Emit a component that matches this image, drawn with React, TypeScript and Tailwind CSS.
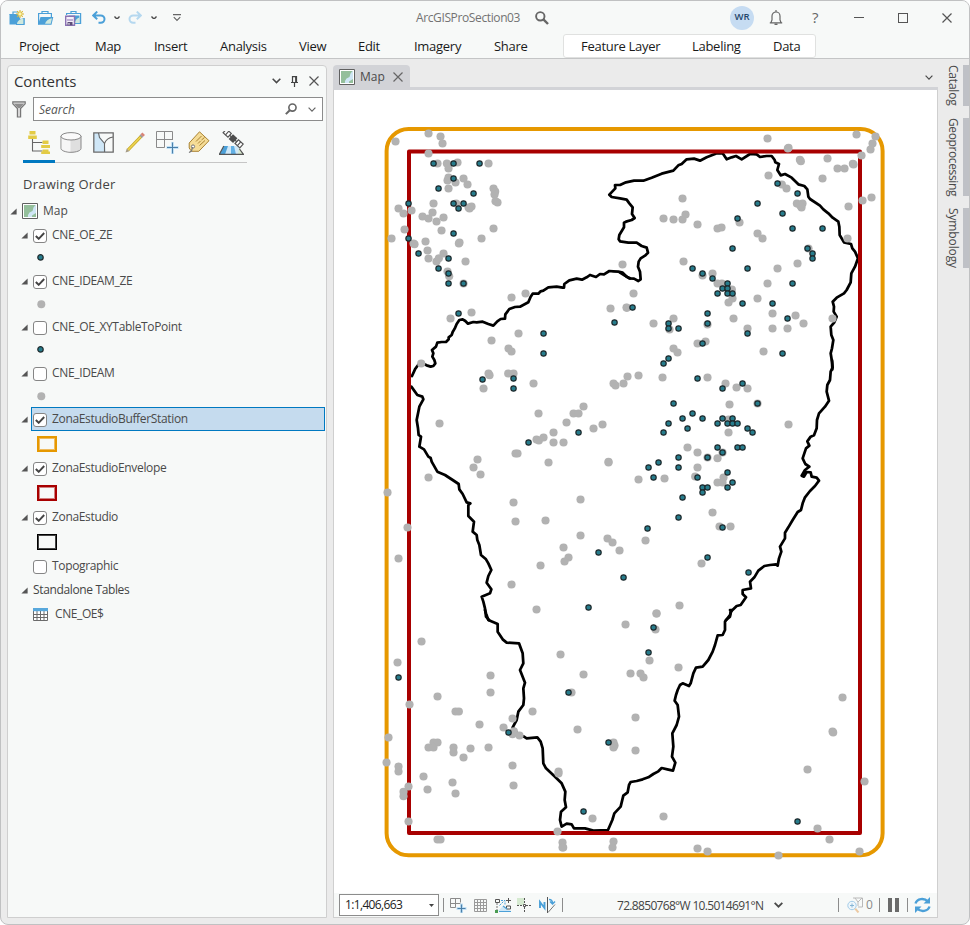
import React from "react";

type Pt = string;

/* ---------- Map data: sheets digitised at three units per pixel ---------- */

interface Sheet {
  x: number;
  y: number;
  ideam: Pt;
  oe: Pt;
}

const SHEETS: Sheet[] = [
  {
    x: 380,
    y: 120,
    ideam:
      "145,40 181,49 187,70 46,64 145,100 172,130 200,130 205,145 232,127 325,130 205,172 202,181 226,187 250,175 262,193 205,205 340,205 345,214 343,223 346,243 352,247 160,250 55,265 70,280 94,271 157,277 127,289 145,295 169,304 190,292 184,331 73,328 34,355 103,372 100,370 136,364 142,391 145,415 169,424 176,414 190,400 236,370 238,367 304,355 340,325 256,424 202,454 207,468 265,262 274,259 228,250 250,490 211,595 274,577 394,532 436,520 334,661 415,640 385,685 394,694 727,433 691,565 739,562 123,730 268,265",
    oe: "160,130 220,130 298,130 220,175 175,205 280,220 85,250 220,250 250,250 235,265 220,340 85,355 115,400 205,415 175,445 205,460 205,490 250,490 235,580 490,640 490,700 703,607",
  },
  {
    x: 620,
    y: 120,
    ideam:
      "442,55 505,83 503,85 539,119 542,123 622,115 709,43 766,49 757,70 751,88 724,106 652,145 673,145 698,131 700,133 607,175 754,232 727,241 685,259 445,166 485,193 499,205 530,250 547,250 544,262 540,256 187,235 130,295 160,298 187,298 196,283 232,313 292,325 304,322 358,307 412,340 427,355 682,355 565,385 190,424 472,445 532,430 247,466 277,460 292,490 305,490 442,490 335,508 337,535 325,547 412,535 40,520 20,563 160,595 100,610 148,628 262,613 340,595 382,625 457,580 457,625 526,586 550,610 502,625 637,595 232,670 256,664 160,685 172,697 430,694",
    oe: "472,190 532,220 412,250 352,295 487,280 517,325 607,325 337,385 562,385 577,400 577,415 217,445 382,445 247,460 277,475 322,490 517,490 307,505 322,505 292,520 322,520 337,520 367,550 457,550 37,562 262,580 502,595 145,610 262,610 145,625 175,625 382,640 247,670 487,700 145,715 130,730",
  },
  {
    x: 380,
    y: 360,
    ideam:
      "325,40 328,45 310,85 384,40 400,40 460,70 178,190 145,352 22,397 82,502 55,595 292,298 280,322 301,343 400,427 406,484 496,481 601,418 601,526 406,280 412,280 475,160 505,307 469,238 476,241 490,232 520,217 520,247 550,247 559,187 580,160 595,160 610,139 640,205 667,193 685,305 685,307 700,70 706,76 730,70 742,49 682,535 697,547 718,571 550,562 565,592 553,604 481,616 394,673 469,748",
    oe: "307,58 400,55 400,85 445,247 595,217 655,577 730,652 625,742",
  },
  {
    x: 620,
    y: 360,
    ideam:
      "55,46 127,52 262,52 316,70 349,82 382,85 328,133 412,130 505,193 325,178 325,217 202,262 232,277 262,292 307,277 292,294 232,322 55,358 133,355 225,349 310,352 292,367 307,367 277,457 298,499 331,499 76,541 244,610 178,736 109,760",
    oe: "232,55 307,85 367,70 160,130 412,130 217,160 187,175 247,175 307,175 337,175 145,190 130,217 202,205 292,190 322,190 337,190 352,190 382,205 397,217 292,262 352,262 367,262 307,277 175,292 262,292 115,307 85,322 175,322 100,352 232,352 322,337 337,367 322,382 247,382 262,382 247,397 187,412 175,472 82,505 307,502 262,592 385,637",
  },
  {
    x: 380,
    y: 610,
    ideam:
      "124,94 829,10 736,43 826,58 541,133 808,151 751,190 781,190 790,202 895,172 610,193 52,157 331,196 331,247 172,259 88,283 226,304 236,304 457,304 397,325 298,343 370,352 401,363 397,372 418,376 592,358 766,322 766,421 574,247 700,397 703,406 700,412 25,382 160,397 172,397 145,412 160,412 220,412 220,427 271,415 325,412 250,442 397,466 400,526 19,457 55,469 55,484 130,499 142,538 217,517 226,550 85,529 70,545 70,558 85,634 172,688 181,688 535,484 535,490 637,625 532,664 547,697 549,712 547,712 700,694 697,712 850,619 952,715 982,724 1195,736 1312,655 1348,688 1438,724 1282,478 1453,514 1387,262 1357,364 1359,367",
    oe: "820,52 805,127 55,202 565,247 385,367 685,397 610,604 1252,634",
  },
];

const BOUNDARY: { x: number; y: number; line: Pt }[] = [
  {
    x: 380,
    y: 120,
    line: "96,768 105,748 112,738 116,733 130,731 140,736 152,740 160,738 166,730 163,720 157,710 160,700 156,690 168,680 172,668 185,666 198,666 206,658 206,652 215,645 218,636 224,626 230,612 238,600 248,598 256,603 264,611 280,606 290,607 308,605 325,612 340,617 352,604 362,597 375,596 376,583 388,567 405,561 420,560 445,547 452,530 458,521 475,521 482,514 490,512 505,502 530,500 548,503 552,503 553,492 568,481 590,476 606,479 620,472 630,465 648,471 660,462 672,463 688,453 700,454 715,455 728,458 740,470 750,475",
  },
  {
    x: 620,
    y: 120,
    line: "0,458 12,465 20,470 28,475 42,476 55,483 62,478 60,455 54,440 56,425 62,415 75,407 84,398 80,383 65,378 50,368 25,368 0,364 -4,358 -2,345 12,322 12,308 18,305 35,300 44,294 36,282 38,262 28,250 20,239 0,235 -25,231 -32,224 -14,205 -15,195 0,195 18,187 42,182 70,182 95,173 125,161 160,152 175,136 185,132 200,118 222,116 240,122 260,112 283,103 290,100 308,100 320,118 335,112 348,108 365,118 390,102 410,103 420,111 440,108 455,108 464,120 466,127 477,132 472,150 482,166 495,162 515,173 535,193 553,198 562,208 565,230 570,237 600,257 610,268 625,280 638,293 655,305 658,320 659,345 672,367 693,372 697,385 705,395 714,415 705,440 694,460 692,487 680,510 672,520 650,533 638,545 642,560 641,575 650,590 643,607 632,620 634,645 640,660 636,685 632,700 636,725 637,748",
  },
  {
    x: 620,
    y: 360,
    line: "636,0 638,22 632,35 630,60 622,75 620,95 627,122 615,140 597,160 591,180 590,205 582,226 572,230 562,244 568,257 558,265 548,295 556,312 568,320 555,330 545,347 552,350 560,336 572,337 575,350 590,353 597,362 585,378 570,393 555,412 548,430 543,450 533,456 518,480 505,502 495,518 495,535 480,560 484,575 477,595 473,617 468,613 450,615 433,618 415,632 403,652 390,665 393,685 368,690 368,702 378,712 362,735 350,738 332,755 330,770 318,780",
  },
  {
    x: 380,
    y: 610,
    line: "1050,0 1055,0 1050,15 1035,35 1035,60 1028,75 1013,76 1005,105 998,125 985,150 968,170 948,173 940,190 932,220 927,228 908,220 900,225 893,240 888,255 884,272 893,285 897,320 890,345 877,370 880,410 876,440 886,458 879,482 862,478 845,474 835,484 820,492 805,502 788,508 770,513 752,516 747,525 743,547 730,557 722,590 703,610 697,630 684,660 640,662 615,655 582,655 575,643 560,641 545,650 540,630 543,605 558,592 554,570 556,545 545,520 525,500 498,475 490,460 488,415 482,395 472,382 440,385 432,380 418,376 398,352 410,330 415,305 430,285 432,265 430,235 435,218 420,180 430,160 428,130 417,100 380,98 368,88 353,65 353,42 325,30 318,10 315,0",
  },
  {
    x: 380,
    y: 360,
    line: "327,780 318,770 315,745 310,725 305,710 330,700 334,688 320,668 325,648 334,630 325,610 318,598 303,585 298,555 292,540 290,525 278,515 282,485 265,468 265,435 271,430 260,427 248,402 238,388 236,372 218,360 195,345 172,335 155,305 152,294 145,290 132,268 118,260 123,230 116,225 114,205 110,180 118,140 130,118 127,110 112,105 94,80",
  },
];

const toXY = (list: Pt) => list.split(" ").map((p) => p.split(",").map(Number));

function MapCanvas() {
  return (
    <svg className="block" width="603" height="803" viewBox="334 90 603 803">
      <rect x="386.6" y="128.9" width="496" height="726.4" rx="22" fill="none" stroke="#e69800" strokeWidth="4" />
      {BOUNDARY.map((b, i) => (
        <g key={i} transform={`translate(${b.x} ${b.y}) scale(0.33333)`}>
          <polyline points={b.line} fill="none" stroke="#000" strokeWidth="8.2" strokeLinejoin="round" strokeLinecap="round" />
        </g>
      ))}
      <rect x="409" y="151.6" width="451" height="681.3" fill="none" stroke="#a80000" strokeWidth="4" strokeLinejoin="round" />
      {SHEETS.map((s, i) => (
        <g key={i} transform={`translate(${s.x + 0.2} ${s.y + 0.2}) scale(0.33333)`} fill="#b2b2b2">
          {toXY(s.ideam).map(([x, y], k) => (
            <circle key={k} cx={x} cy={y} r="12.2" />
          ))}
        </g>
      ))}
      {SHEETS.map((s, i) => (
        <g key={i} transform={`translate(${s.x + 0.2} ${s.y + 0.2}) scale(0.33333)`} fill="#267c8c" stroke="#1f2b2e" strokeWidth="3.6">
          {toXY(s.oe).map(([x, y], k) => (
            <circle key={k} cx={x} cy={y} r="8" />
          ))}
        </g>
      ))}
    </svg>
  );
}

/* ------------------------------- Icons ------------------------------- */

function Chevron({ w = 8, color = "#4a4a4a", sw = 1.4 }: { w?: number; color?: string; sw?: number }) {
  return (
    <svg width={w} height={w * 0.625} viewBox="0 0 8 5" fill="none" stroke={color} strokeWidth={sw}>
      <path d="M.6 .7 4 4.1 7.4 .7" />
    </svg>
  );
}

function CloseX({ s, color = "#555", sw = 1.2 }: { s: number; color?: string; sw?: number }) {
  return (
    <svg width={s} height={s} viewBox={`0 0 ${s} ${s}`} stroke={color} strokeWidth={sw}>
      <path d={`M.5 .5 ${s - 0.5} ${s - 0.5} M${s - 0.5} .5 .5 ${s - 0.5}`} />
    </svg>
  );
}

function NewProjectIcon() {
  return (
    <svg width="17" height="16" viewBox="0 0 17 16">
      <path d="M4 4V2h5M.6 4.500H8" fill="none" stroke="#4ba0d8" strokeWidth="1.2" />
      <path d="M.5 4h8l3 5 4-1v6.500H.5z" fill="#4ba0d8" />
      <path d="M8 14c0-2 1.500-4 4-5l3-.5V14z" fill="#cfe8dd" />
      <path d="M15 8v6.500H7" fill="none" stroke="#4ba0d8" strokeWidth="1.2" />
      <path d="M11 0v8M7 4h8M8.200 1.200l5.600 5.600M13.800 1.200 8.200 6.800" stroke="#d9b833" strokeWidth="1.100" />
      <circle cx="11" cy="4" r="2" fill="#fdf5b0" stroke="#d9b833" strokeWidth=".6" />
    </svg>
  );
}

function OpenProjectIcon() {
  return (
    <svg width="17" height="16" viewBox="0 0 17 16">
      <path d="M5 3.500v-2h6v2M1.600 14.500v-11h12.800v4" fill="none" stroke="#4ba0d8" strokeWidth="1.200" />
      <path d="M3.500 7h12.800l-1.800 7.700H1z" fill="#4ba0d8" />
      <path d="M8 13.800c1-3 3-4.500 7-5.500l-1.300 5.500z" fill="#cfe8dd" />
    </svg>
  );
}

function SaveProjectIcon() {
  return (
    <svg width="17" height="16" viewBox="0 0 17 16">
      <path d="M6 3.500v-2h5v2M1.600 5V3.500h14v10H10" fill="none" stroke="#4ba0d8" strokeWidth="1.200" />
      <path d="M3.500 5.500h11V13H10z" fill="#4ba0d8" />
      <path d="M10 13c0-3 2-4.500 4.500-5.500V13z" fill="#cfe8dd" />
      <path d="M.7 6.200h8.800v9H.7z" fill="#f5f0fa" stroke="#8b73b3" strokeWidth="1.400" />
      <path d="M2 10h6" stroke="#8b73b3" strokeWidth="1.200" />
      <path d="M2.500 12h5v3.200h-5z" fill="#5d4f78" />
      <path d="M3.500 13h1v1.700h-1z" fill="#fff" />
    </svg>
  );
}

function UndoIcon({ flip = false, color }: { flip?: boolean; color: string }) {
  return (
    <svg width="14" height="13" viewBox="0 0 14 13" className={flip ? "-scale-x-100" : ""}>
      <path d="M5.200 .6 1.200 4.400 5.200 8.200M1.600 4.400h7.200a3.700 3.700 0 0 1 0 7.400H6.500" fill="none" stroke={color} strokeWidth="2" />
    </svg>
  );
}

function Magnifier({ s, flip = false }: { s: number; flip?: boolean }) {
  return (
    <svg width={s} height={s} viewBox="0 0 14 14" className={flip ? "-scale-x-100" : ""} fill="none" stroke="#666">
      <circle cx="5.300" cy="5.300" r="4.200" strokeWidth="1.900" />
      <path d="M8.400 8.400 13 13" strokeWidth="2.400" />
    </svg>
  );
}

function MapThumb() {
  return (
    <svg width="16" height="16" viewBox="0 0 16 16">
      <path d="M.5 .5h15v15H.5z" fill="#fff" stroke="#606060" />
      <path d="M2 2h12v12H2z" fill="#cfe6f5" />
      <path d="M2 2h11.500l-2 2.500-1 3.500-3 1.500-1.500 2.500V14L4 13l-2-3z" fill="#94bf9b" />
      <path d="M2 9v5h4l-1-2z" fill="#94bf9b" />
      <path d="M10 12.500l4-2.500v4h-4z" fill="#94bf9b" />
    </svg>
  );
}

function Funnel() {
  return (
    <svg width="14" height="17" viewBox="0 0 14 17">
      <path d="M.8 .8h12.400v2L8.600 7.500V16H5.400V7.500L.8 2.800z" fill="#d6d6d6" stroke="#777" strokeWidth="1.200" />
      <path d="M2 2.800h10L8 7H6z" fill="#8e8e8e" />
    </svg>
  );
}

function TreeIcon() {
  return (
    <svg width="23" height="23" viewBox="0 0 23 23">
      <path d="M4.500 8v12h10M4.500 11.500h10" fill="none" stroke="#666" strokeWidth="1.100" />
      <path d="M1.500 0h6v3.500h-6zM.2 4.500h8.600V8H.2zM14.500 9.500h6V13h-6zM13.200 14H22v3h-8.800zM14.500 18.500h6v2H22V23h-8.800v-2.500h1.300z" fill="#e3cb45" />
    </svg>
  );
}

function CylinderIcon() {
  return (
    <svg width="22" height="21" viewBox="0 0 22 21">
      <path d="M1 4v12.500c0 2 4.500 3.800 10 3.800s10-1.800 10-3.800V4z" fill="#dfdfdf" stroke="#888" />
      <path d="M1.600 5.500C4 7.500 8 8 10.500 8v11.600C6 19.600 2 18 1.600 16.500z" fill="#f6f6f6" />
      <ellipse cx="11" cy="4.300" rx="10" ry="3.700" fill="#fafafa" stroke="#888" />
    </svg>
  );
}

function SelectionIcon() {
  return (
    <svg width="21" height="21" viewBox="0 0 21 21">
      <path d="M1 1h19v19H1z" fill="#f7f9f8" />
      <path d="M1 1h5.500l1 4.500L11.500 11l1.500 9H1z" fill="#cfe7f7" />
      <path d="M5.500 1l1 4.500 5 6V20M20 5c-3 .5-7 2.500-8.500 6.500" fill="none" stroke="#666" strokeWidth="1.100" />
      <path d="M.8 .8h19.400v19.400H.8z" fill="none" stroke="#6a6a6a" strokeWidth="1.300" />
    </svg>
  );
}

function PencilIcon() {
  return (
    <svg width="21" height="21" viewBox="0 0 21 21">
      <path d="M3 18 16 4.500" stroke="#c4a622" strokeWidth="3.200" />
      <path d="M3 18 16 4.500" stroke="#ecd452" strokeWidth="1.800" />
      <path d="M15.700 4.800l1.300-1.300" stroke="#999" strokeWidth="3.400" />
      <path d="M16.800 3.600 18.700 1.700" stroke="#d98477" strokeWidth="3.600" />
      <path d="M.5 20.500 1.800 16.600 4.400 19.200z" fill="#a59b85" />
    </svg>
  );
}

function GridPlusIcon() {
  return (
    <svg width="24" height="23" viewBox="0 0 24 23" fill="none">
      <path d="M1.500 .5h16v8.500M1.500 .5v16h8M9.500 .5v16M1.500 8.500h16" stroke="#8a8a8a" />
      <path d="M17.500 11V23M11.500 16.500h12" stroke="#c3e1f5" strokeWidth="3" />
      <path d="M17.500 11.500V22.500M12 16.500H23" stroke="#4a7fa8" />
    </svg>
  );
}

function TagIcon() {
  return (
    <svg width="22" height="22" viewBox="0 0 22 22">
      <path d="M1.200 12 11.500 .8 21 9.700 10.800 20.300H3.500L1.200 17z" fill="#f5dc96" stroke="#a98334" strokeWidth="1" />
      <path d="M8 10.500l5.500-5.500M10 12.500l2.500-2.500M13.500 9l3-2.500M11.500 14.500l5.500-5" stroke="#a98334" strokeWidth="1" />
      <circle cx="5" cy="15.500" r="1.600" fill="#fff" stroke="#777" />
      <path d="M4.500 16l-1 4-2.500 1.500" fill="none" stroke="#777" strokeWidth="1.200" />
    </svg>
  );
}

function SatelliteIcon() {
  return (
    <svg width="25" height="24" viewBox="0 0 25 24">
      <path d="M5 15h14l5.500 8.500H0z" fill="#cfe7f7" />
      <path d="M5 15h4l-3 8.500H0z" fill="#4ba0d8" />
      <path d="M12 15h3l2 8.500h-5z" fill="#62b0e4" />
      <path d="M20 16l4 7h-5z" fill="#d9ead0" />
      <path d="M4.800 15 .4 23.300h24L20.500 18" fill="none" stroke="#555" strokeWidth="1.200" />
      <g transform="rotate(42 14 8)">
        <path d="M2.500 5h6.500v5H2.500zM18.500 5H25v5h-6.500z" fill="#fff" stroke="#555" strokeWidth="1.200" />
        <path d="M5.700 5v5M21.700 5v5M9 7.500h10" stroke="#555" strokeWidth="1.200" />
        <path d="M10.800 4.500h6v6.500h-6z" fill="#4d4d4d" />
      </g>
    </svg>
  );
}

function TableIcon() {
  return (
    <svg width="15" height="13" viewBox="0 0 15 13">
      <path d="M.5 .5h14v12H.5z" fill="#fff" stroke="#6b6b6b" />
      <path d="M4 3v9.500M7.500 3v9.500M11 3v9.500M.5 6.500h14M.5 9.500h14" stroke="#6b6b6b" />
      <path d="M0 0h15v3.200H0z" fill="#58a8dc" />
    </svg>
  );
}

function Bell() {
  return (
    <svg width="14" height="15" viewBox="0 0 14 15" fill="none" stroke="#666" strokeWidth="1.200">
      <path d="M7 0v1.500M.8 12.800h12.400M2 12.500 3 10V6a4 4 0 0 1 8 0v4l1 2.500M5.500 14.300h3" />
    </svg>
  );
}

/* ----------------------------- Contents pane ----------------------------- */

function Twisty() {
  return (
    <svg width="7" height="7" viewBox="0 0 7 7">
      <path d="M6.600 .4v6.200H.4z" fill="#555" />
    </svg>
  );
}

function Check({ on }: { on: boolean }) {
  return (
    <span className="mt-px flex h-[14px] w-[14px] shrink-0 items-center justify-center rounded-[3px] border border-[#858585] bg-white">
      {on && (
        <svg width="10" height="8" viewBox="0 0 10 8">
          <path d="M.8 4 3.700 6.800 9.200 1" fill="none" stroke="#444" strokeWidth="1.900" />
        </svg>
      )}
    </span>
  );
}

interface Layer {
  name: string;
  on: boolean;
  symbol?: "oe" | "ideam" | "orange" | "red" | "black";
  selected?: boolean;
}

const LAYERS: Layer[] = [
  { name: "CNE_OE_ZE", on: true, symbol: "oe" },
  { name: "CNE_IDEAM_ZE", on: true, symbol: "ideam" },
  { name: "CNE_OE_XYTableToPoint", on: false, symbol: "oe" },
  { name: "CNE_IDEAM", on: false, symbol: "ideam" },
  { name: "ZonaEstudioBufferStation", on: true, symbol: "orange", selected: true },
  { name: "ZonaEstudioEnvelope", on: true, symbol: "red" },
  { name: "ZonaEstudio", on: true, symbol: "black" },
  { name: "Topographic", on: false },
];

function SymbolRow({ kind }: { kind: NonNullable<Layer["symbol"]> }) {
  if (kind === "oe" || kind === "ideam") {
    return (
      <div className="flex h-[22px] items-center pl-[28px]">
        <svg width="10" height="10" viewBox="0 0 10 10">
          {kind === "oe" ? (
            <circle cx="4.500" cy="4.400" r="2.700" fill="#267c8c" stroke="#1f2b2e" strokeWidth="1.200" />
          ) : (
            <circle cx="5.300" cy="5.300" r="4" fill="#b2b2b2" />
          )}
        </svg>
      </div>
    );
  }
  return (
    <div className="flex h-[25px] items-center pl-[29px]">
      {kind === "orange" && <span className="h-4 w-5 border-2 border-[#e69800] shadow-[inset_0_0_0_1px_#eebb60]" />}
      {kind === "red" && <span className="h-4 w-5 border-2 border-[#a80000] shadow-[inset_0_0_0_1px_#d08080]" />}
      {kind === "black" && <span className="h-4 w-5 border border-black shadow-[inset_0_0_0_1px_#444]" />}
    </div>
  );
}

function ContentsPane() {
  return (
    <section className="flex w-[320px] shrink-0 flex-col rounded-t-[4px] border border-[#cfcfcf] bg-[#f7f9f8]">
      <div className="flex h-[30px] items-center pl-[6px] pr-[7px] text-[#333]">
        <h2 className="flex-1 text-[15px] tracking-[-0.1px]">Contents</h2>
        <Chevron w={9} />
        <svg className="ml-[10px] mr-[11px]" width="7" height="11" viewBox="0 0 7 11" fill="none" stroke="#444">
          <path d="M1.500 6V.6h4V6M0 6.500h7M3.500 6.500V11M4.700 .6V6" strokeWidth="1.200" />
        </svg>
        <CloseX s={10} />
      </div>
      <div className="flex h-[26px] items-center pl-[4px] pr-[3px]">
        <Funnel />
        <div className="ml-[7px] flex h-6 flex-1 items-center border border-[#8c8c8c] bg-white pl-[5px] pr-[6px]">
          <span className="flex-1 pt-px text-[12px] italic text-[#555]">Search</span>
          <Magnifier s={12} flip />
          <span className="ml-[11px]">
            <Chevron w={8} color="#666" sw={1.2} />
          </span>
        </div>
      </div>
      <div className="ml-[15px] mt-[9px] flex h-8 w-[224px] border-b border-[#c6c6c6]">
        <div className="flex h-8 w-8 justify-center border-b-[3px] border-[#0079c1]">
          <TreeIcon />
        </div>
        <div className="flex w-8 justify-center pt-px">
          <CylinderIcon />
        </div>
        <div className="flex w-8 justify-center pt-px">
          <SelectionIcon />
        </div>
        <div className="flex w-8 justify-center pt-px">
          <PencilIcon />
        </div>
        <div className="flex w-8 justify-center">
          <GridPlusIcon />
        </div>
        <div className="flex w-8 justify-center">
          <TagIcon />
        </div>
        <div className="flex w-8 justify-center">
          <SatelliteIcon />
        </div>
      </div>
      <div className="mt-[9px] h-6 pl-[15px] text-[13px] font-medium leading-6 tracking-[0.22px] text-[#444]">Drawing Order</div>
      <div className="mt-[3px] flex h-6 items-center pl-[2px] text-[12px] text-[#4a4a4a]">
        <Twisty />
        <span className="ml-[5px]">
          <MapThumb />
        </span>
        <span className="ml-[5px]">Map</span>
      </div>
      {LAYERS.map((l) => (
        <React.Fragment key={l.name}>
          <div className="flex h-6 items-center pl-[13px] text-[12px] tracking-[-0.34px] text-[#4a4a4a]">
            {l.symbol ? <Twisty /> : <span className="w-[7px]" />}
            <div
              className={
                l.selected
                  ? "ml-[3px] mr-px flex h-6 flex-1 items-center border border-[#0079c1] bg-[#c5dbee] pl-px"
                  : "ml-[3px] flex h-6 flex-1 items-center border border-transparent pl-px"
              }
            >
              <Check on={l.on} />
              <span className="mb-px ml-[5px]">{l.name}</span>
            </div>
          </div>
          {l.symbol && <SymbolRow kind={l.symbol} />}
        </React.Fragment>
      ))}
      <div className="flex h-6 items-center pl-[13px] text-[12px] font-medium tracking-[-0.36px] text-[#444]">
        <Twisty />
        <span className="ml-[5px]">Standalone Tables</span>
      </div>
      <div className="flex h-6 items-center pl-[25px] text-[12px] tracking-[-0.4px] text-[#4a4a4a]">
        <TableIcon />
        <span className="ml-[7px]">CNE_OE$</span>
      </div>
    </section>
  );
}

/* ------------------------------- Header ------------------------------- */

function TitleBar() {
  return (
    <div className="flex h-[33px] items-center pl-[8px]">
      <NewProjectIcon />
      <span className="ml-[11px]">
        <OpenProjectIcon />
      </span>
      <span className="ml-[11px]">
        <SaveProjectIcon />
      </span>
      <span className="ml-[10px]">
        <UndoIcon color="#4ba0d8" />
      </span>
      <span className="ml-[8px]">
        <Chevron w={6} sw={1.9} />
      </span>
      <span className="ml-[8px]">
        <UndoIcon flip color="#b5d8ef" />
      </span>
      <span className="ml-[9px]">
        <Chevron w={6} sw={1.9} />
      </span>
      <svg className="ml-[16px] mt-px" width="8" height="8" viewBox="0 0 8 8" fill="none" stroke="#666" strokeWidth="1.200">
        <path d="M0 .7h8M.8 3.200 4 6.400 7.200 3.200" />
      </svg>
      <span className="ml-[235px] w-[104px] whitespace-nowrap pt-px text-[12px] tracking-[-0.38px] text-[#737373]">ArcGISProSection03</span>
      <span className="ml-[15px]">
        <Magnifier s={14} />
      </span>
      <span className="ml-[181px] flex h-6 w-6 items-center justify-center rounded-full bg-[#c6dcf2] text-[9.500px] font-semibold text-[#23466b]">WR</span>
      <span className="ml-[15px]">
        <Bell />
      </span>
      <span className="ml-[29px] w-[7px] pb-px text-[15px] text-[#666]">?</span>
      <span className="ml-[35px] h-px w-[10px] bg-[#555]" />
      <span className="ml-[34px] h-[10px] w-[10px] border border-[#555]" />
      <span className="ml-[34px]">
        <CloseX s={10} />
      </span>
    </div>
  );
}

const TABS = [
  { name: "Project", cls: "ml-[18px] w-[76px]" },
  { name: "Map", cls: "w-[59px]" },
  { name: "Insert", cls: "w-[66px]" },
  { name: "Analysis", cls: "w-[79px]" },
  { name: "View", cls: "w-[59px]" },
  { name: "Edit", cls: "w-[56px]" },
  { name: "Imagery", cls: "w-[80px]" },
  { name: "Share", cls: "w-[69px]" },
];

function RibbonTabs() {
  return (
    <div className="flex h-[24px] items-center whitespace-nowrap text-[13px] tracking-[-0.28px] text-[#1a1a1a]">
      {TABS.map((t) => (
        <span key={t.name} className={"pt-[2px] " + t.cls}>
          {t.name}
        </span>
      ))}
      <div className="flex h-6 w-[253px] items-center rounded-[3px] border border-[#e0e1e0] bg-white pl-[17px] pt-[2px]">
        <span className="w-[111px]">Feature Layer</span>
        <span className="w-[81px]">Labeling</span>
        <span>Data</span>
      </div>
    </div>
  );
}

/* ------------------------------- Map view ------------------------------- */

function StatusBar() {
  return (
    <div className="flex h-6 items-center bg-[#f7f9f8] pl-[5px]">
      <div className="flex h-[22px] w-[100px] items-center justify-between whitespace-nowrap border border-[#8c8c8c] bg-white pl-[5px] pr-[4px] text-[12px] tracking-[-0.65px] text-[#222]">
        1:1,406,663
        <svg width="5" height="3" viewBox="0 0 5 3">
          <path d="M0 0h5L2.500 3z" fill="#444" />
        </svg>
      </div>
      <span className="ml-[4px] h-[14px] w-px bg-[#8c8c8c]" />
      <svg className="ml-[6px]" width="17" height="15" viewBox="0 0 17 15" fill="none">
        <path d="M.5 .5h10v4M.5 .5v9h5M5.500 .5v9M.5 5.500h10" stroke="#8a8a8a" />
        <path d="M11.500 5.500V15M6.500 10.500H16.500" stroke="#c3e1f5" strokeWidth="3" />
        <path d="M11.500 6.500v8M7.500 10.500H15.500" stroke="#4a7fa8" strokeWidth="1.200" />
      </svg>
      <svg className="ml-[7px]" width="13" height="13" viewBox="0 0 13 13" fill="none" stroke="#9a9a9a">
        <path d="M.5 .5h12v12H.5zM3.500 .5v12M6.500 .5v12M9.500 .5v12M.5 3.500h12M.5 6.500h12M.5 9.500h12" />
      </svg>
      <svg className="ml-[8px]" width="17" height="15" viewBox="0 0 17 15" fill="none">
        <path d="M3 13 8 8l8 5z" fill="#cfe7f7" />
        <path d="M4.500 7.500 9.500 2.500M6 2.500h4v4" stroke="#4ba0d8" strokeDasharray="2 1" />
        <path d="M2 5v7" stroke="#777" strokeDasharray="2 1" />
        <path d="M.5 1.500h4v3h-4zM11.500 8h4v3h-4zM13.500 0v5M11 2.500h5" stroke="#555" />
        <path d="M4 13.500h12M8 8l4 3" stroke="#4ba0d8" strokeWidth="1.200" />
        <path d="M0 12h3v3H0z" fill="#4b9b52" />
      </svg>
      <svg className="ml-[5px]" width="15" height="15" viewBox="0 0 15 15" fill="none">
        <path d="M0 0h7v7H0z" fill="#d5ead0" />
        <path d="M7.500 0v15M0 7.500h15" stroke="#555" strokeDasharray="2 1" />
        <path d="M6.500 6.500h2v2h-2z" stroke="#555" fill="#fff" />
      </svg>
      <svg className="ml-[7px]" width="17" height="16" viewBox="0 0 17 16" fill="none">
        <path d="M1 11V5l4.500 6V5" stroke="#4ba0d8" strokeWidth="1.900" />
        <path d="M8.500 0v16" stroke="#555" />
        <path d="M10 2.500c2.500 0 3.500 1 3.500 4M11 4.500l2.500 2.500L16 4.500" stroke="#4ba0d8" strokeWidth="1.500" />
        <path d="M9 15.500 16 7.500" stroke="#777" />
      </svg>
      <span className="ml-[6px] h-[14px] w-px bg-[#8c8c8c]" />
      <span className="ml-[54px] w-[148px] whitespace-nowrap pt-px text-[12px] tracking-[-0.68px] text-[#444]">72.8850768°W 10.5014691°N</span>
      <span className="ml-[9px]">
        <Chevron w={9} sw={1.6} />
      </span>
      <span className="ml-[55px] h-[14px] w-px bg-[#8c8c8c]" />
      <svg className="ml-[8px]" width="16" height="16" viewBox="0 0 16 16" fill="none">
        <path d="M6 1h9.500v9H11M8 1l3 4 4-4M11 5v4" stroke="#b9b9b9" />
        <circle cx="5" cy="8.500" r="4.200" fill="#eef6fb" stroke="#a3cce8" />
        <path d="M5 6.500v4M3 8.500h4" stroke="#86b6d6" />
        <path d="M8.200 11.700 11.500 15.500" stroke="#ecc9a2" strokeWidth="2" />
      </svg>
      <span className="ml-[3px] w-[8px] text-[12px] text-[#8a8a8a]">0</span>
      <span className="ml-[5px] h-[14px] w-px bg-[#8c8c8c]" />
      <span className="ml-[8px] h-[14px] w-[4px] bg-[#6a6a6a]" />
      <span className="ml-[3px] h-[14px] w-[4px] bg-[#6a6a6a]" />
      <span className="ml-[8px] h-[14px] w-px bg-[#8c8c8c]" />
      <svg className="ml-[6px]" width="17" height="16" viewBox="0 0 17 16" fill="none" stroke="#4ba0d8" strokeWidth="2.400">
        <path d="M1.500 6.500C3 1.500 10 .5 14 4.500M15.500 9.500C14 14.500 7 15.500 3 11.500" />
        <path d="M16 0v6.500H9.500zM1 16V9.500h6.500z" fill="#4ba0d8" stroke="none" />
      </svg>
    </div>
  );
}

function MapPane() {
  return (
    <section className="ml-[6px] flex w-[605px] shrink-0 flex-col">
      <div className="flex h-[22px] items-end justify-between pr-[5px]">
        <div className="flex h-[22px] w-[77px] items-center rounded-t-[4px] bg-[#d2d3d7] pl-[6px] pt-[2px] text-[12px] text-[#4a4a4a]">
          <MapThumb />
          <span className="ml-[5px] mr-[9px] w-[24px]">Map</span>
          <CloseX s={10} color="#666" />
        </div>
        <span className="mb-[7px]">
          <Chevron w={8} sw={1.200} />
        </span>
      </div>
      <div className="h-[3px] bg-[#d2d3d7]" />
      <div className="border-x border-b border-[#cfcfcf] bg-white">
        <MapCanvas />
        <StatusBar />
      </div>
    </section>
  );
}

function SideTabs() {
  return (
    <aside className="flex flex-1 flex-col items-end whitespace-nowrap text-[12px] leading-[17px] text-[#4a4a4a]">
      <div className="h-[41px] border-r-[6px] border-[#bfc1c6] pr-px tracking-[-0.2px] [writing-mode:vertical-rl]">Catalog</div>
      <div className="mt-[12px] h-[78px] border-r-[6px] border-[#bfc1c6] pr-px tracking-[-0.38px] [writing-mode:vertical-rl]">Geoprocessing</div>
      <div className="mt-[12px] h-[60px] border-r-[6px] border-[#bfc1c6] pr-px tracking-[-0.12px] [writing-mode:vertical-rl]">Symbology</div>
    </aside>
  );
}

export default function App() {
  return (
    <div className="h-[925px] w-[970px] overflow-hidden bg-white font-['Open_Sans','Noto_Sans',sans-serif]">
      <div className="flex h-[925px] w-[970px] flex-col overflow-hidden rounded-[8px] border border-[#c0c1c2] bg-[#ebebeb]">
        <header className="h-[58px] shrink-0 border-b border-[#c4c5c6] bg-[#f7f9f8]">
          <TitleBar />
          <RibbonTabs />
        </header>
        <main className="flex flex-1 pb-[6px] pl-[6px] pt-[6px]">
          <ContentsPane />
          <MapPane />
          <SideTabs />
        </main>
      </div>
    </div>
  );
}
